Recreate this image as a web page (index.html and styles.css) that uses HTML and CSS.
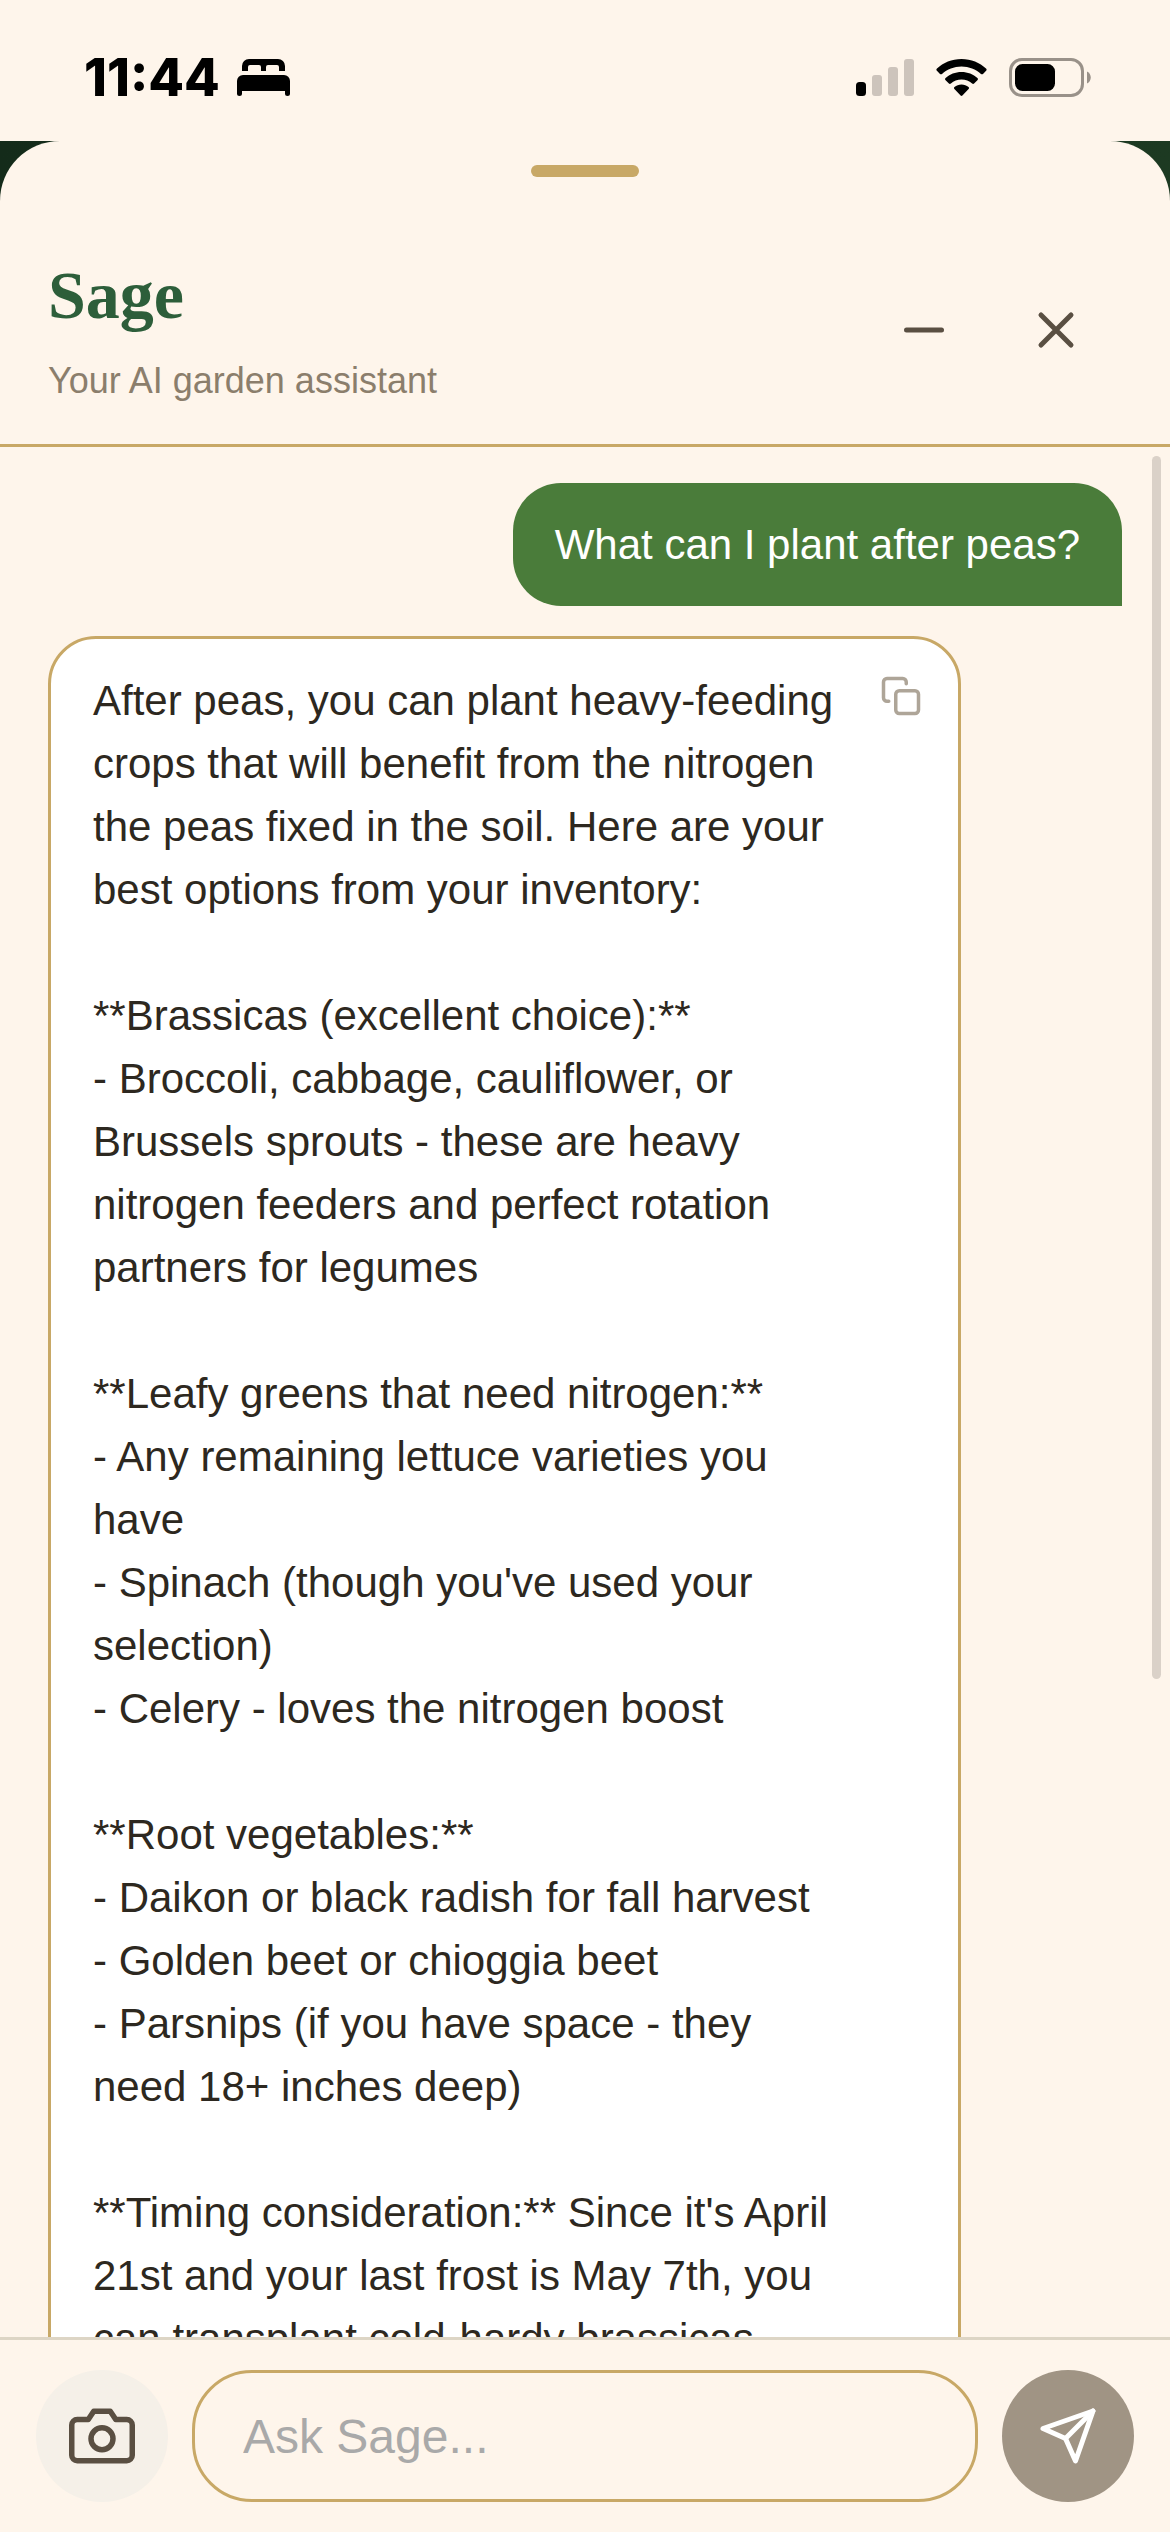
FILE: index.html
```html
<!DOCTYPE html>
<html lang="en">
<head>
    <meta charset="UTF-8">
    <meta name="viewport" content="width=device-width, initial-scale=1.0">
    <title>Sage - Your AI garden assistant</title>
    <link rel="stylesheet" href="styles.css">
</head>
<body>
    <div class="status-bar">
        <div class="status-left">
            <span class="time">11:44</span>
            <svg width="53" height="37" viewBox="0 0 53 37" aria-hidden="true">
                <path d="M5 12V7a7 7 0 0 1 7-7h29a7 7 0 0 1 7 7v5h-6V8a2 2 0 0 0-2-2H31a2 2 0 0 0-2 2v4h-5V8a2 2 0 0 0-2-2h-9a2 2 0 0 0-2 2v4z"/>
                <path d="M0 22a6 6 0 0 1 6-6h41a6 6 0 0 1 6 6v12.500a2.500 2.500 0 0 1-5 0V32H5v2.500a2.500 2.500 0 0 1-5 0z"/>
            </svg>
        </div>
        <div class="status-right">
            <svg width="58" height="37" viewBox="0 0 58 37" aria-hidden="true">
                <rect x="0" y="23" width="10" height="14" rx="3.500"/>
                <g fill="#cdc4bc">
                    <rect x="16" y="16" width="10" height="21" rx="3"/>
                    <rect x="32" y="8" width="10" height="29" rx="3"/>
                    <rect x="48" y="0" width="10" height="37" rx="3"/>
                </g>
            </svg>
            <svg width="51" height="37" viewBox="0 0 51 37" aria-hidden="true">
                <path d="M25.500 0C35.300 0 43.700 3.700 50 9.600c.8.7.8 1.500.1 2.200l-3.100 3.100c-.6.6-1.400.6-2 0C39.800 10.300 33 7.500 25.500 7.500S11.200 10.300 6 14.900c-.6.6-1.400.6-2 0L.9 11.800c-.7-.7-.7-1.500.1-2.200C7.300 3.700 15.700 0 25.500 0z"/>
                <path d="M25.500 13c6.200 0 11.800 2.300 15.900 6.100.7.700.7 1.500 0 2.200L38.100 24.500c-.6.6-1.300.6-2 0-2.800-2.500-6.500-4-10.600-4s-7.800 1.500-10.600 4c-.7.600-1.400.6-2 0l-3.300-3.200c-.7-.7-.7-1.500 0-2.200C13.700 15.300 19.300 13 25.500 13z"/>
                <path d="M25.500 25.500c2.700 0 5.100.9 7 2.500.7.6.7 1.400.1 2l-6.200 6.500c-.6.600-1.200.600-1.800 0L18.400 30c-.6-.6-.6-1.400.1-2 1.900-1.600 4.300-2.500 7-2.500z"/>
            </svg>
            <svg width="82" height="39" viewBox="0 0 82 39" aria-hidden="true">
                <rect x="1.500" y="1.500" width="72" height="36" rx="11.500" fill="none" stroke="#999189" stroke-width="3"/>
                <rect x="6" y="6" width="40" height="27" rx="7.500"/>
                <path d="M78 13.500c5 2 5 10 0 12z" fill="#999189"/>
            </svg>
        </div>
    </div>

    <div class="backdrop">
        <main class="sheet">
            <div class="handle"></div>

            <header class="chat-header">
                <div class="chat-title">
                    <h1>Sage</h1>
                    <p>Your AI garden assistant</p>
                </div>
                <div class="header-actions">
                    <button type="button" class="icon-button" aria-label="Minimize">
                        <svg class="icon" width="60" height="60" viewBox="0 0 24 24"><path d="M5 12h14"/></svg>
                    </button>
                    <button type="button" class="icon-button" aria-label="Close">
                        <svg class="icon" width="60" height="60" viewBox="0 0 24 24"><path d="M18 6L6 18M6 6l12 12"/></svg>
                    </button>
                </div>
            </header>

            <section class="chat">
                <div class="messages">
                    <div class="message user">What can I plant after peas?</div>
                    <div class="message assistant">
                        <button type="button" class="copy-button" aria-label="Copy message">
                            <svg class="icon" width="42" height="42" viewBox="0 0 24 24">
                                <rect x="9" y="9" width="13" height="13" rx="2"/>
                                <path d="M5 15H4a2 2 0 0 1-2-2V4a2 2 0 0 1 2-2h9a2 2 0 0 1 2 2v1"/>
                            </svg>
                        </button>
                        <div class="message-text">After peas, you can plant heavy-feeding crops that will benefit from the nitrogen the peas fixed in the soil. Here are your best options from your inventory:

**Brassicas (excellent choice):**
- Broccoli, cabbage, cauliflower, or Brussels sprouts - these are heavy nitrogen feeders and perfect rotation partners for legumes

**Leafy greens that need nitrogen:**
- Any remaining lettuce varieties you have
- Spinach (though you've used your selection)
- Celery - loves the nitrogen boost

**Root vegetables:**
- Daikon or black radish for fall harvest
- Golden beet or chioggia beet
- Parsnips (if you have space - they need 18+ inches deep)

**Timing consideration:** Since it's April 21st and your last frost is May 7th, you can transplant cold-hardy brassicas</div>
                    </div>
                </div>
                <div class="scroll-thumb"></div>
            </section>

            <form class="composer">
                <button type="button" class="round-button camera" aria-label="Add photo">
                    <svg class="icon" width="66" height="66" viewBox="0 0 24 24">
                        <path d="M23 19a2 2 0 0 1-2 2H3a2 2 0 0 1-2-2V8a2 2 0 0 1 2-2h4l2-3h6l2 3h4a2 2 0 0 1 2 2z"/>
                        <circle cx="12" cy="13" r="4"/>
                    </svg>
                </button>
                <input type="text" class="prompt" placeholder="Ask Sage..." aria-label="Ask Sage">
                <button type="submit" class="round-button send" aria-label="Send">
                    <svg class="icon" width="60" height="60" viewBox="0 0 24 24">
                        <path d="M22 2L11 13"/>
                        <path d="M22 2l-7 20-4-9-9-4z"/>
                    </svg>
                </button>
            </form>
        </main>
    </div>
</body>
</html>
```

FILE: styles.css
```css
* {
    box-sizing: border-box;
}
body {
    margin: 0;
    height: 100vh;
    display: flex;
    flex-direction: column;
    background-color: #fef5eb;
    color: #2d2820;
    font-family: "Liberation Sans", Arial, sans-serif;
    font-size: 42px;
    line-height: 63px;
}
button {
    display: flex;
    align-items: center;
    justify-content: center;
    padding: 0;
    border: none;
    background: none;
    color: #5a4f42;
    cursor: pointer;
}
.icon {
    display: block;
    fill: none;
    stroke: currentColor;
    stroke-width: 2;
    stroke-linecap: round;
    stroke-linejoin: round;
}

/* phone status bar */
.status-bar {
    flex: none;
    display: flex;
    align-items: center;
    justify-content: space-between;
    height: 141px;
    padding: 14px 79px 0 84px;
    color: #000;
}
.status-left,
.status-right {
    display: flex;
    align-items: center;
}
.status-left {
    gap: 17px;
}
.status-right {
    gap: 22px;
}
.time {
    font-family: Inter, sans-serif;
    font-size: 52px;
    font-weight: 800;
}

/* sheet */
.backdrop {
    flex: 1;
    min-height: 0;
    display: flex;
    background: linear-gradient(to right, #142b1a, #1d3a22);
}
.sheet {
    flex: 1;
    min-width: 0;
    display: flex;
    flex-direction: column;
    background-color: #fef5eb;
    border-radius: 60px 60px 0 0;
}
.handle {
    flex: none;
    width: 108px;
    height: 12px;
    margin: 24px auto 0;
    border-radius: 6px;
    background-color: #c8a866;
}

.chat-header {
    display: flex;
    align-items: center;
    justify-content: space-between;
    padding: 78px 48px 39px;
    border-bottom: 3px solid #c8a866;
}
.chat-title h1 {
    margin: 0;
    color: #2d5e3a;
    font-family: "Liberation Serif", Georgia, serif;
    font-size: 68px;
    font-weight: 700;
    line-height: 80px;
}
.chat-title p {
    margin: 22px 0 0;
    color: #8b7e6c;
    font-size: 36px;
    line-height: 48px;
}
.header-actions {
    display: flex;
}
.icon-button {
    width: 132px;
    height: 132px;
}

/* messages */
.chat {
    position: relative;
    flex: 1;
    min-height: 0;
    display: flex;
}
.messages {
    flex: 1;
    display: flex;
    flex-direction: column;
    gap: 30px;
    padding: 36px 48px;
    overflow-y: auto;
    scrollbar-width: none;
}
.message {
    flex: none;
    max-width: 85%;
    padding: 30px 42px;
    border-radius: 48px;
}
.user {
    align-self: flex-end;
    border-bottom-right-radius: 0;
    background-color: #4a7c3a;
    color: #fff;
}
.assistant {
    position: relative;
    align-self: flex-start;
    padding-right: 120px;
    border: 3px solid #c8a866;
    border-bottom-left-radius: 0;
    background-color: #fff;
}
.message-text {
    white-space: pre-wrap;
}
.copy-button {
    position: absolute;
    top: 24px;
    right: 24px;
    width: 66px;
    height: 66px;
    color: #aea598;
}
.scroll-thumb {
    position: absolute;
    top: 9px;
    right: 9px;
    width: 9px;
    height: calc(65% - 6px);
    border-radius: 5px;
    background-color: #dad1c8;
}

/* input row */
.composer {
    flex: none;
    display: flex;
    gap: 24px;
    padding: 30px 36px;
    border-top: 3px solid #ddd5c5;
}
.round-button {
    flex: none;
    width: 132px;
    height: 132px;
    border-radius: 50%;
}
.camera {
    background-color: #f5f0e8;
}
.send {
    background-color: #a09484;
    color: #fff;
}
.prompt {
    flex: 1;
    min-width: 0;
    padding: 0 48px;
    border: 3px solid #c8a866;
    border-radius: 60px;
    background: none;
    color: inherit;
    font-family: inherit;
    font-size: 48px;
}
.prompt::placeholder {
    color: #a9a9a9;
}
```
